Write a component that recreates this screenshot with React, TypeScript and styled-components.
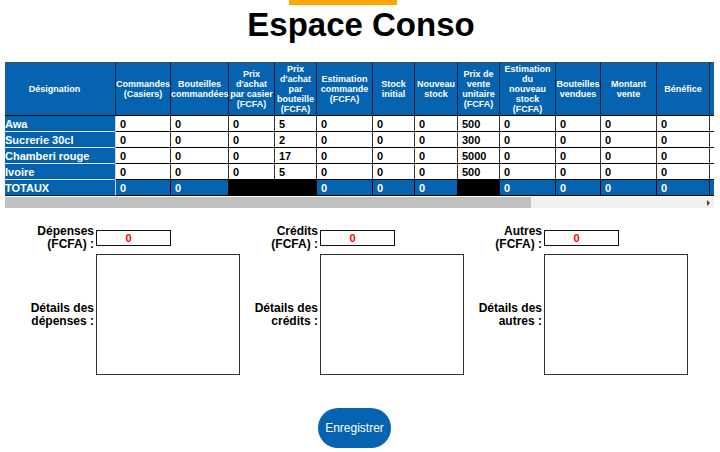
import React from "react";
import styled, { createGlobalStyle } from "styled-components";

const BLUE = "#0563b0";

const GlobalStyle = createGlobalStyle`
  * { box-sizing: border-box; }
  body {
    margin: 0;
    background: #fff;
    color: #000;
    font-family: "Liberation Sans", Arial, sans-serif;
  }
`;

const Page = styled.main`
  display: flex;
  flex-direction: column;
`;

const AccentRow = styled.div`
  display: flex;
  justify-content: center;
  padding-right: 34px;
`;

const Accent = styled.div`
  width: 108px;
  height: 5px;
  background: #ffa500;
`;

const Title = styled.h1`
  margin: 0 0 17px;
  padding-left: 2px;
  font-size: 33px;
  line-height: 40px;
  text-align: center;
`;

const TableArea = styled.section`
  margin: 0 6px 0 5px;
`;

const TableViewport = styled.div`
  overflow: hidden;
`;

const Table = styled.table`
  width: 820px;
  table-layout: fixed;
  border-collapse: separate;
  border-spacing: 0;
  font-weight: bold;
`;

const HeadCell = styled.th`
  height: 54px;
  padding: 0;
  background: ${BLUE};
  color: #fff;
  font-size: 9px;
  line-height: 10px;
  white-space: pre;
  text-align: center;
  vertical-align: middle;
  border-top: 1px solid #4a4a4a;
  border-bottom: 1px solid #000;
  &:first-child {
    padding-right: 11px;
  }
  & + & {
    border-left: 1px solid #06203a;
  }
`;

const RowName = styled.th`
  height: 16px;
  padding: 1px 0 0;
  background: ${BLUE};
  color: #fff;
  font-size: 11px;
  line-height: 14px;
  text-align: left;
  white-space: nowrap;
  border-bottom: 1px solid #e4eef7;
  tfoot & {
    border-bottom-color: #06203a;
  }
`;

const Cell = styled.td<{ $tone?: "total" | "blank" }>`
  height: 16px;
  padding: 1px 0 0 4px;
  background: ${(p) => (p.$tone === "total" ? BLUE : p.$tone === "blank" ? "#000" : "#fff")};
  color: ${(p) => (p.$tone ? "#fff" : "#000")};
  font-size: 11px;
  line-height: 14px;
  border-left: 1px solid ${(p) => (p.$tone ? "#000" : "#333")};
  border-bottom: 1px solid #000;
  ${RowName} + & {
    border-left-color: #c5d9eb;
  }
`;

const ScrollTrack = styled.div`
  display: flex;
  align-items: center;
  justify-content: space-between;
  height: 11px;
  margin-top: 1px;
  padding-right: 4px;
  background: #f1f1f1;
`;

const ScrollThumb = styled.div`
  width: calc(75% - 3px);
  height: 100%;
  background: #c1c1c1;
`;

const Form = styled.form`
  display: flex;
  flex-direction: column;
`;

const Groups = styled.div`
  display: grid;
  grid-template-columns: repeat(3, 1fr);
  padding: 17px 32px 0 16px;
`;

const Group = styled.div`
  display: grid;
  grid-template-columns: 1fr 144px;
  grid-template-rows: 26px 121px;
  row-gap: 3px;
  align-items: center;
`;

const Label = styled.label`
  padding-right: 2px;
  font-size: 12px;
  font-weight: bold;
  line-height: 13px;
  text-align: right;
  white-space: pre;
`;

const Amount = styled.input`
  width: 75px;
  height: 16px;
  margin: 0;
  padding: 0 10px 0 0;
  border: 1px solid #111;
  border-radius: 0;
  background: #fff;
  color: #f00;
  font: bold 11px "Liberation Sans", Arial, sans-serif;
  text-align: center;
`;

const Details = styled.textarea`
  width: 100%;
  height: 121px;
  margin: 0;
  padding: 2px;
  border: 1px solid #333;
  border-radius: 0;
  background: #fff;
  font: 12px "Liberation Sans", Arial, sans-serif;
  resize: none;
`;

const Actions = styled.div`
  display: flex;
  justify-content: center;
  padding: 33px 11px 4px 0;
`;

const SaveButton = styled.button`
  height: 40px;
  padding: 0 7px;
  border: 0;
  border-radius: 20px;
  background: ${BLUE};
  color: #fff;
  font: 12px "Liberation Sans", Arial, sans-serif;
`;

const columns = [
  { label: "Désignation", width: 110 },
  { label: "Commandes\n(Casiers)", width: 55 },
  { label: "Bouteilles\ncommandées", width: 58 },
  { label: "Prix\nd'achat\npar casier\n(FCFA)", width: 46 },
  { label: "Prix\nd'achat\npar\nbouteille\n(FCFA)", width: 42 },
  { label: "Estimation\ncommande\n(FCFA)", width: 56 },
  { label: "Stock\ninitial", width: 42 },
  { label: "Nouveau\nstock", width: 43 },
  { label: "Prix de\nvente\nunitaire\n(FCFA)", width: 42 },
  { label: "Estimation\ndu\nnouveau\nstock\n(FCFA)", width: 56 },
  { label: "Bouteilles\nvendues", width: 45 },
  { label: "Montant\nvente", width: 56 },
  { label: "Bénéfice", width: 53 },
  { label: "", width: 116 },
];

const rows = [
  { name: "Awa", unitCost: "5", price: "500" },
  { name: "Sucrerie 30cl", unitCost: "2", price: "300" },
  { name: "Chamberi rouge", unitCost: "17", price: "5000" },
  { name: "Ivoire", unitCost: "5", price: "500" },
];

const totals = ["0", "0", null, null, "0", "0", "0", null, "0", "0", "0", "0", ""];

const groups = [
  { id: "depenses", amount: "Dépenses\n(FCFA) :", details: "Détails des\ndépenses :" },
  { id: "credits", amount: "Crédits\n(FCFA) :", details: "Détails des\ncrédits :" },
  { id: "autres", amount: "Autres\n(FCFA) :", details: "Détails des\nautres :" },
];

export default function App() {
  return (
    <Page>
      <GlobalStyle />
      <AccentRow>
        <Accent />
      </AccentRow>
      <Title>Espace Conso</Title>
      <TableArea>
        <TableViewport>
          <Table>
            <colgroup>
              {columns.map((c, i) => (
                <col key={i} width={c.width} />
              ))}
            </colgroup>
            <thead>
              <tr>
                {columns.map((c, i) => (
                  <HeadCell key={i} scope="col">
                    {c.label}
                  </HeadCell>
                ))}
              </tr>
            </thead>
            <tbody>
              {rows.map((r) => (
                <tr key={r.name}>
                  <RowName scope="row">{r.name}</RowName>
                  {["0", "0", "0", r.unitCost, "0", "0", "0", r.price, "0", "0", "0", "0", ""].map((v, i) => (
                    <Cell key={i}>{v}</Cell>
                  ))}
                </tr>
              ))}
            </tbody>
            <tfoot>
              <tr>
                <RowName scope="row">TOTAUX</RowName>
                {totals.map((v, i) => (
                  <Cell key={i} $tone={v === null ? "blank" : "total"}>
                    {v}
                  </Cell>
                ))}
              </tr>
            </tfoot>
          </Table>
        </TableViewport>
        <ScrollTrack>
          <ScrollThumb />
          <svg width="3" height="6" viewBox="0 0 3 6" aria-hidden="true">
            <path d="M0 0L3 3L0 6Z" fill="#404040" />
          </svg>
        </ScrollTrack>
      </TableArea>
      <Form onSubmit={(e) => e.preventDefault()}>
        <Groups>
          {groups.map((g) => (
            <Group key={g.id}>
              <Label htmlFor={g.id}>{g.amount}</Label>
              <Amount id={g.id} type="text" inputMode="numeric" defaultValue="0" />
              <Label htmlFor={`${g.id}-details`}>{g.details}</Label>
              <Details id={`${g.id}-details`} />
            </Group>
          ))}
        </Groups>
        <Actions>
          <SaveButton type="submit">Enregistrer</SaveButton>
        </Actions>
      </Form>
    </Page>
  );
}
